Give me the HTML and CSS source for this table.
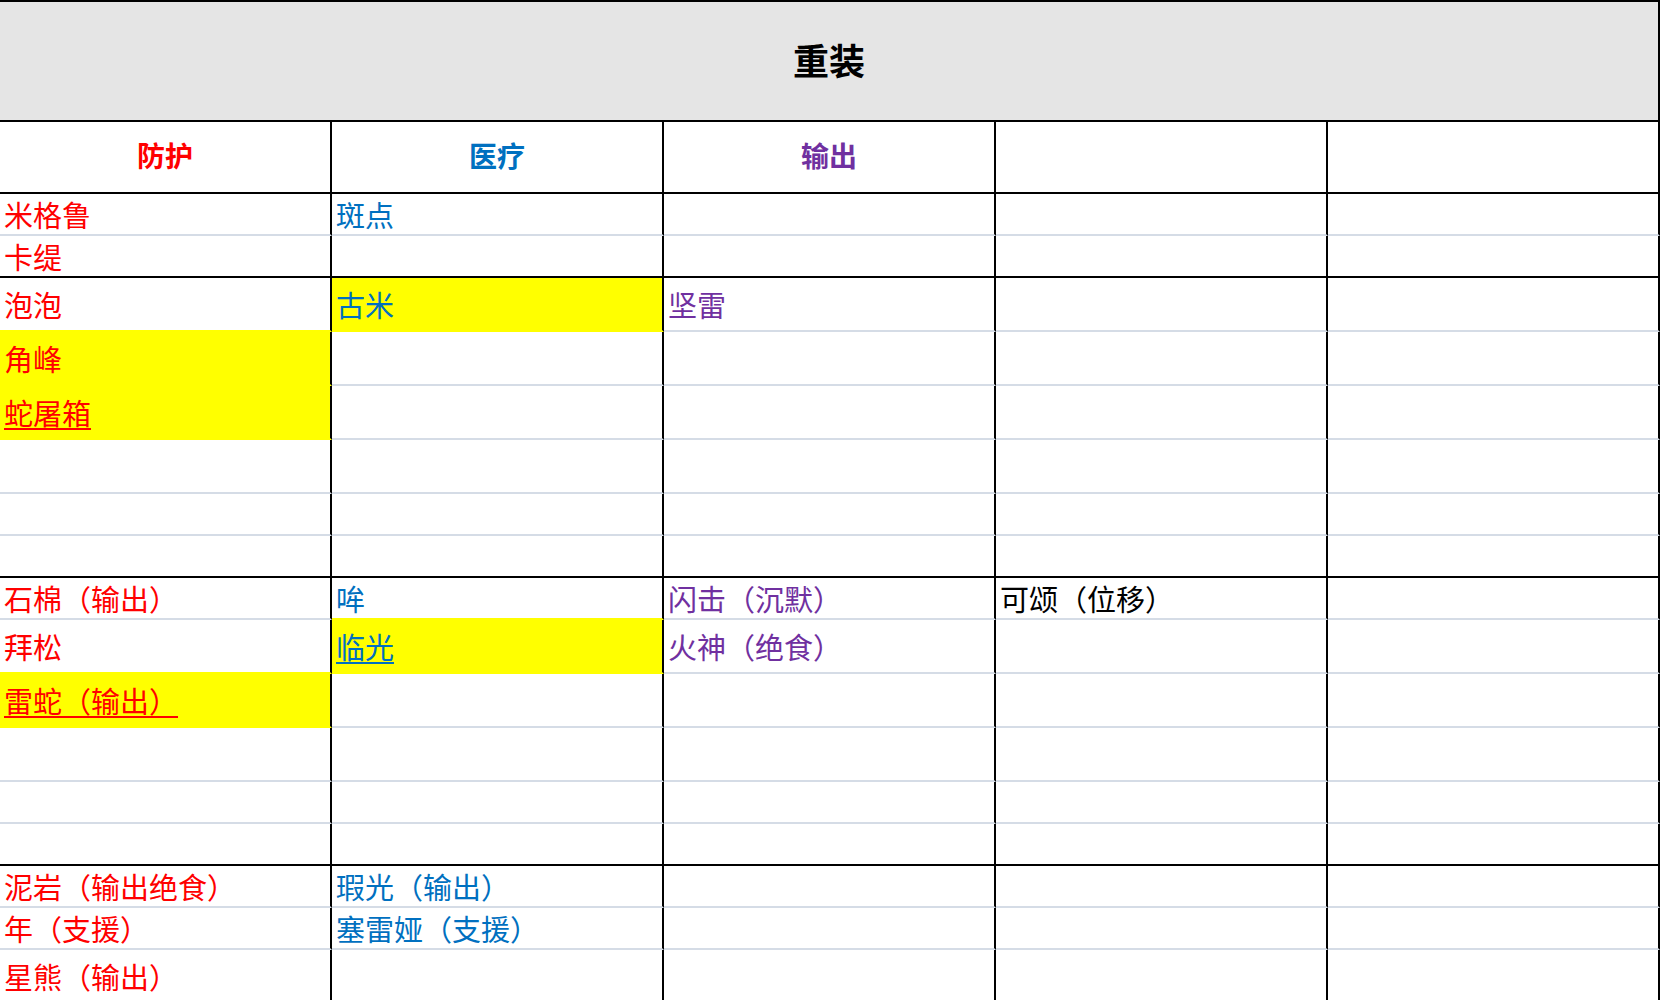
FILE: index.html
```html
<!DOCTYPE html>
<html lang="zh-CN">
<head>
<meta charset="utf-8">
<title>重装</title>
<link rel="stylesheet" href="styles.css">
</head>
<body>
<div class="sheet">
  <div class="title">重装</div>

  <div class="row head">
    <div class="cell red">防护</div>
    <div class="cell blue">医疗</div>
    <div class="cell purple">输出</div>
    <div class="cell"></div>
    <div class="cell"></div>
  </div>

  <!-- group 1 -->
  <div class="row h42">
    <div class="cell red">米格鲁</div>
    <div class="cell blue">斑点</div>
    <div class="cell"></div><div class="cell"></div><div class="cell"></div>
  </div>
  <div class="row h42 end">
    <div class="cell red">卡缇</div>
    <div class="cell"></div><div class="cell"></div><div class="cell"></div><div class="cell"></div>
  </div>

  <!-- group 2 -->
  <div class="row h54">
    <div class="cell red pre-fill">泡泡</div>
    <div class="cell blue fill">古米</div>
    <div class="cell purple">坚雷</div>
    <div class="cell"></div><div class="cell"></div>
  </div>
  <div class="row h54">
    <div class="cell red fill">角峰</div>
    <div class="cell"></div><div class="cell"></div><div class="cell"></div><div class="cell"></div>
  </div>
  <div class="row h54">
    <div class="cell red fill"><span class="link">蛇屠箱</span></div>
    <div class="cell"></div><div class="cell"></div><div class="cell"></div><div class="cell"></div>
  </div>
  <div class="row h54">
    <div class="cell"></div><div class="cell"></div><div class="cell"></div><div class="cell"></div><div class="cell"></div>
  </div>
  <div class="row h42">
    <div class="cell"></div><div class="cell"></div><div class="cell"></div><div class="cell"></div><div class="cell"></div>
  </div>
  <div class="row h42 end">
    <div class="cell"></div><div class="cell"></div><div class="cell"></div><div class="cell"></div><div class="cell"></div>
  </div>

  <!-- group 3 -->
  <div class="row h42">
    <div class="cell red">石棉（输出）</div>
    <div class="cell blue pre-fill">哞</div>
    <div class="cell purple">闪击（沉默）</div>
    <div class="cell black">可颂（位移）</div>
    <div class="cell"></div>
  </div>
  <div class="row h54">
    <div class="cell red pre-fill">拜松</div>
    <div class="cell blue fill"><span class="link">临光</span></div>
    <div class="cell purple">火神（绝食）</div>
    <div class="cell"></div><div class="cell"></div>
  </div>
  <div class="row h54">
    <div class="cell red fill"><span class="link">雷蛇（输出）</span></div>
    <div class="cell"></div><div class="cell"></div><div class="cell"></div><div class="cell"></div>
  </div>
  <div class="row h54">
    <div class="cell"></div><div class="cell"></div><div class="cell"></div><div class="cell"></div><div class="cell"></div>
  </div>
  <div class="row h42">
    <div class="cell"></div><div class="cell"></div><div class="cell"></div><div class="cell"></div><div class="cell"></div>
  </div>
  <div class="row h42 end">
    <div class="cell"></div><div class="cell"></div><div class="cell"></div><div class="cell"></div><div class="cell"></div>
  </div>

  <!-- group 4 -->
  <div class="row h42">
    <div class="cell red">泥岩（输出绝食）</div>
    <div class="cell blue">瑕光（输出）</div>
    <div class="cell"></div><div class="cell"></div><div class="cell"></div>
  </div>
  <div class="row h42">
    <div class="cell red">年（支援）</div>
    <div class="cell blue">塞雷娅（支援）</div>
    <div class="cell"></div><div class="cell"></div><div class="cell"></div>
  </div>
  <div class="row h54">
    <div class="cell red">星熊（输出）</div>
    <div class="cell"></div><div class="cell"></div><div class="cell"></div><div class="cell"></div>
  </div>
</div>
</body>
</html>
```

FILE: styles.css
```css
html, body {
  margin: 0;
  padding: 0;
  background: #ffffff;
}

body {
  font-family: "Noto Sans CJK SC", "Noto Sans", sans-serif;
  color: #000000;
}

.sheet {
  width: 1660px;
  border-top: 2px solid #000000;
}

.title {
  box-sizing: border-box;
  height: 120px;
  background: #e5e5e5;
  border-bottom: 2px solid #000000;
  border-right: 2px solid #000000;
  display: flex;
  align-items: center;
  justify-content: center;
  font-size: 36px;
  font-weight: 700;
  line-height: 1;
  padding-bottom: 4px;
}

.row {
  display: grid;
  grid-template-columns: repeat(5, 1fr);
}

.cell {
  box-sizing: border-box;
  border-right: 2px solid #000000;
  border-bottom: 2px solid #d5dce6;
  display: flex;
  align-items: center;
  padding-left: 4px;
  padding-top: 1px;
  font-size: 29px;
  line-height: 1;
  white-space: nowrap;
  overflow: hidden;
}

.h42 { height: 42px; }
.h54 { height: 54px; }

.head {
  height: 72px;
}

.head .cell {
  justify-content: center;
  padding: 0 0 5px 0;
  font-weight: 700;
  font-size: 28px;
  border-bottom-color: #000000;
}

.end .cell {
  border-bottom-color: #000000;
}

.fill {
  background: #ffff00;
  border-bottom-color: #ffff00;
}

.pre-fill {
  border-bottom-color: #ffff00;
}

.red { color: #ff0000; }
.blue { color: #0070c0; }
.purple { color: #7030a0; }
.black { color: #000000; }

.link {
  text-decoration: underline;
  text-decoration-thickness: 2px;
  text-underline-offset: 3px;
}
```
